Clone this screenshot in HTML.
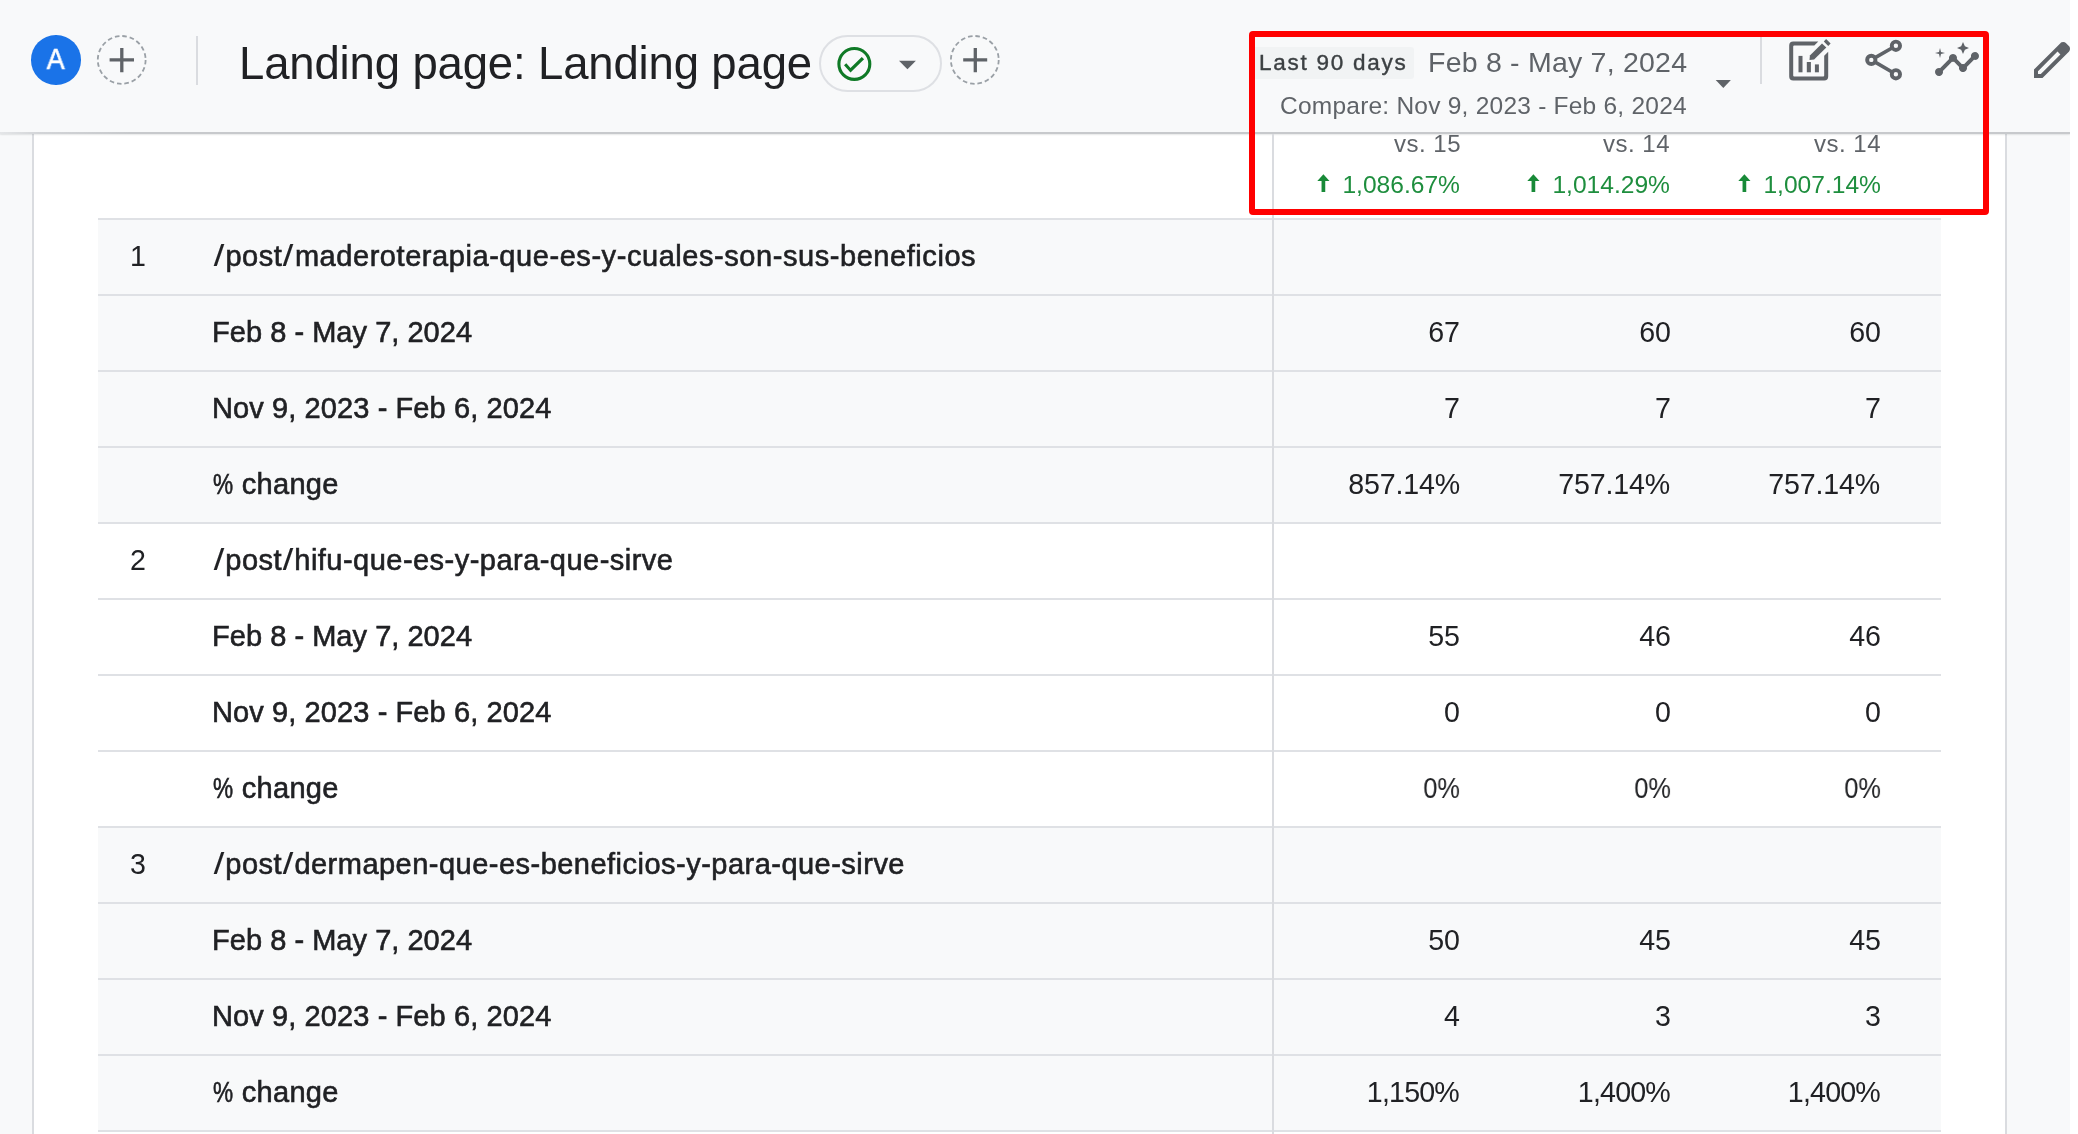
<!DOCTYPE html>
<html lang="en">
<head>
<meta charset="utf-8">
<title>Landing page: Landing page</title>
<style>
html,body{margin:0;padding:0;}
body{width:2078px;height:1134px;overflow:hidden;background:#f8f9fa;position:relative;font-family:"Liberation Sans",sans-serif;color:#202124;}
.abs{position:absolute;}
.t{position:absolute;white-space:nowrap;line-height:1;will-change:transform;}
#strip{left:2070px;top:0;width:8px;height:1134px;background:#fff;}
#card{left:32px;top:134px;width:1971px;height:1010px;background:#fff;border-left:2px solid #dadce0;border-right:2px solid #dadce0;}
#hline{left:0;top:132px;width:2070px;height:2px;background:linear-gradient(90deg,#e4e6e8 0,#d2d4d7 40px,#c7c9cc 130px);box-shadow:0 1px 1.5px rgba(60,64,67,.12);}
.grp{left:98px;width:1843px;height:304px;background:#f8f9fa;}
.rl{left:98px;width:1843px;height:2px;background:#dfe1e5;}
#vline{left:1272px;top:134px;width:2px;height:1000px;background:#dadce0;}
.lbl{font-size:29px;font-weight:400;color:#202124;-webkit-text-stroke:0.6px #202124;}
.idx{font-size:28.6px;color:#202124;}
.num{font-size:28.6px;color:#202124;text-align:right;width:300px;}
.c1{left:1160px;}.c2{left:1370px;}.c3{left:1580px;}
.vs{font-size:24px;color:#5f6368;text-align:right;width:300px;}
.pc{font-size:24.6px;color:#1e8e3e;letter-spacing:0;text-align:right;width:300px;}
</style>
</head>
<body>
<div class="abs" id="card"></div>
<div class="abs" id="hline"></div>
<div class="abs" id="strip"></div>
<!--TABLE-->
<div class="abs grp" style="top:218px"></div>
<div class="abs rl" style="top:218px"></div>
<div class="t idx" style="left:130px;top:241.8px">1</div>
<div class="t lbl" style="left:212.6px;top:242.3px;letter-spacing:0.56px"><span style="display:inline-block;transform:scaleX(1.3);-webkit-text-stroke:0.1px #202124;margin:0 1.900px">/</span>post<span style="display:inline-block;transform:scaleX(1.3);-webkit-text-stroke:0.1px #202124;margin:0 1.900px">/</span>maderoterapia-que-es-y-cuales-son-sus-beneficios</div>
<div class="abs rl" style="top:294px"></div>
<div class="t lbl" style="left:211.9px;top:318.3px;letter-spacing:0.03px">Feb 8 - May 7, 2024</div>
<div class="t num" style="left:1160.00px;top:317.8px;">67</div>
<div class="t num" style="left:1370.50px;top:317.8px;">60</div>
<div class="t num" style="left:1580.50px;top:317.8px;">60</div>
<div class="abs rl" style="top:370px"></div>
<div class="t lbl" style="left:211.6px;top:394.3px;letter-spacing:0.1px">Nov 9, 2023 - Feb 6, 2024</div>
<div class="t num" style="left:1160.00px;top:393.8px;">7</div>
<div class="t num" style="left:1370.50px;top:393.8px;">7</div>
<div class="t num" style="left:1580.50px;top:393.8px;">7</div>
<div class="abs rl" style="top:446px"></div>
<div class="t lbl" style="left:213px;top:470.3px;letter-spacing:0.3px"><span style="display:inline-block;transform:scaleX(.78);transform-origin:left center;margin-right:-5.700px">%</span> change</div>
<div class="t num" style="left:1159.83px;top:469.8px;letter-spacing:-0.17px;">857.14%</div>
<div class="t num" style="left:1370.33px;top:469.8px;letter-spacing:-0.17px;">757.14%</div>
<div class="t num" style="left:1580.33px;top:469.8px;letter-spacing:-0.17px;">757.14%</div>
<div class="abs rl" style="top:522px"></div>
<div class="t idx" style="left:130px;top:545.8px">2</div>
<div class="t lbl" style="left:212.6px;top:546.3px;letter-spacing:0.47px"><span style="display:inline-block;transform:scaleX(1.3);-webkit-text-stroke:0.1px #202124;margin:0 1.900px">/</span>post<span style="display:inline-block;transform:scaleX(1.3);-webkit-text-stroke:0.1px #202124;margin:0 1.900px">/</span>hifu-que-es-y-para-que-sirve</div>
<div class="abs rl" style="top:598px"></div>
<div class="t lbl" style="left:211.9px;top:622.3px;letter-spacing:0.03px">Feb 8 - May 7, 2024</div>
<div class="t num" style="left:1160.00px;top:621.8px;">55</div>
<div class="t num" style="left:1370.50px;top:621.8px;">46</div>
<div class="t num" style="left:1580.50px;top:621.8px;">46</div>
<div class="abs rl" style="top:674px"></div>
<div class="t lbl" style="left:211.6px;top:698.3px;letter-spacing:0.1px">Nov 9, 2023 - Feb 6, 2024</div>
<div class="t num" style="left:1160.00px;top:697.8px;">0</div>
<div class="t num" style="left:1370.50px;top:697.8px;">0</div>
<div class="t num" style="left:1580.50px;top:697.8px;">0</div>
<div class="abs rl" style="top:750px"></div>
<div class="t lbl" style="left:213px;top:774.3px;letter-spacing:0.3px"><span style="display:inline-block;transform:scaleX(.78);transform-origin:left center;margin-right:-5.700px">%</span> change</div>
<div class="t num" style="left:1160.00px;top:773.8px;transform:scaleX(.89);transform-origin:right center;">0%</div>
<div class="t num" style="left:1370.50px;top:773.8px;transform:scaleX(.89);transform-origin:right center;">0%</div>
<div class="t num" style="left:1580.50px;top:773.8px;transform:scaleX(.89);transform-origin:right center;">0%</div>
<div class="abs grp" style="top:826px"></div>
<div class="abs rl" style="top:826px"></div>
<div class="t idx" style="left:130px;top:849.8px">3</div>
<div class="t lbl" style="left:212.6px;top:850.3px;letter-spacing:0.48px"><span style="display:inline-block;transform:scaleX(1.3);-webkit-text-stroke:0.1px #202124;margin:0 1.900px">/</span>post<span style="display:inline-block;transform:scaleX(1.3);-webkit-text-stroke:0.1px #202124;margin:0 1.900px">/</span>dermapen-que-es-beneficios-y-para-que-sirve</div>
<div class="abs rl" style="top:902px"></div>
<div class="t lbl" style="left:211.9px;top:926.3px;letter-spacing:0.03px">Feb 8 - May 7, 2024</div>
<div class="t num" style="left:1160.00px;top:925.8px;">50</div>
<div class="t num" style="left:1370.50px;top:925.8px;">45</div>
<div class="t num" style="left:1580.50px;top:925.8px;">45</div>
<div class="abs rl" style="top:978px"></div>
<div class="t lbl" style="left:211.6px;top:1002.3px;letter-spacing:0.1px">Nov 9, 2023 - Feb 6, 2024</div>
<div class="t num" style="left:1160.00px;top:1001.8px;">4</div>
<div class="t num" style="left:1370.50px;top:1001.8px;">3</div>
<div class="t num" style="left:1580.50px;top:1001.8px;">3</div>
<div class="abs rl" style="top:1054px"></div>
<div class="t lbl" style="left:213px;top:1078.3px;letter-spacing:0.3px"><span style="display:inline-block;transform:scaleX(.78);transform-origin:left center;margin-right:-5.700px">%</span> change</div>
<div class="t num" style="left:1159.20px;top:1077.8px;letter-spacing:-0.8px;">1,150%</div>
<div class="t num" style="left:1369.70px;top:1077.8px;letter-spacing:-0.8px;">1,400%</div>
<div class="t num" style="left:1579.70px;top:1077.8px;letter-spacing:-0.8px;">1,400%</div>
<div class="abs rl" style="top:1130px"></div>
<div class="abs" id="vline"></div>
<!--/TABLE-->
<!--HEADER-->
<div class="abs" id="avatar" style="left:31.3px;top:35.2px;width:49.5px;height:49.4px;border-radius:50%;background:#1a73e8;"></div>
<div class="t" id="avA" style="left:31.2px;top:45.3px;width:49.2px;text-align:center;font-size:29px;color:#fff;-webkit-text-stroke:0.6px #fff;transform:scaleX(.93);">A</div>
<svg class="abs" style="left:96px;top:34px;" width="52" height="52" viewBox="0 0 52 52"><circle cx="25.7" cy="25.9" r="23.9" fill="none" stroke="#9aa0a6" stroke-width="1.8" stroke-dasharray="4.6 2.9"/><path d="M13.6 25.9h24.4M25.8 14v24.2" stroke="#5f6368" stroke-width="3.3" fill="none"/></svg>
<div class="abs" style="left:196px;top:35.5px;width:2px;height:49px;background:#dadce0;"></div>
<div class="t" id="title" style="left:239.3px;top:40.8px;font-size:45.5px;color:#202124;letter-spacing:-0.15px;">Landing page: Landing page</div>
<div class="abs" id="pill" style="left:819.4px;top:35.2px;width:118.2px;height:52.8px;border:2px solid #dee0e4;border-radius:30px;"></div>
<svg class="abs" style="left:834px;top:44px;" width="42" height="42" viewBox="0 0 42 42"><circle cx="20.35" cy="19.9" r="15.45" fill="none" stroke="#0f7a26" stroke-width="3.1"/><path d="M10 21.2l2.300-2 4.200 4.700 11.250-11 2.350 2.400-13.600 13.300z" fill="#0f7a26"/></svg>
<svg class="abs" style="left:898px;top:59px;" width="20" height="12" viewBox="0 0 20 12"><path d="M1 1.8h16.9L9.45 10.3z" fill="#5f6368"/></svg>
<svg class="abs" style="left:949px;top:34px;" width="52" height="52" viewBox="0 0 52 52"><circle cx="25.8" cy="25.9" r="23.9" fill="none" stroke="#9aa0a6" stroke-width="1.8" stroke-dasharray="4.6 2.9"/><path d="M14.2 25.8h24M26.3 14v24.2" stroke="#5f6368" stroke-width="3.3" fill="none"/></svg>

<div class="abs" id="chip" style="left:1251px;top:47px;width:163.4px;height:32.3px;background:#f1f3f4;border-radius:3px;"></div>
<div class="t" id="last90" style="left:1258.8px;top:51.9px;font-size:22.5px;color:#3c4043;letter-spacing:1.75px;-webkit-text-stroke:0.4px #3c4043;">Last 90 days</div>
<div class="t" id="drange" style="left:1427.5px;top:47.6px;font-size:28.5px;color:#5f6368;letter-spacing:0.22px;">Feb 8 - May 7, 2024</div>
<div class="t" id="cmp" style="left:1280.3px;top:93.5px;font-size:24.5px;color:#5f6368;letter-spacing:0.23px;">Compare: Nov 9, 2023 - Feb 6, 2024</div>
<svg class="abs" style="left:1714px;top:78px;" width="20" height="12" viewBox="0 0 20 12"><path d="M1.7 2h15.2L9.3 10z" fill="#5f6368"/></svg>
<div class="abs" style="left:1760px;top:37px;width:2px;height:47px;background:#dadce0;"></div>

<svg class="abs" id="ic1" style="left:1783px;top:36px;" width="52" height="48" viewBox="0 0 52 48" fill="#5f6368">
<path d="M35.3 5.400H10.200a4 4 0 0 0-4 4V40.500a4 4 0 0 0 4 4H41.200a4 4 0 0 0 4-4V15.700l-4 4V39.500a1 1 0 0 1-1 1H11.200a1 1 0 0 1-1-1V10.400a1 1 0 0 1 1-1H31.300z"/>
<rect x="15.500" y="19.900" width="4" height="16.400"/><rect x="23.800" y="26" width="4.100" height="10.300"/><rect x="31.900" y="28.400" width="4" height="7.900"/>
<path d="M26.500 24l.4-4.600L39 7.500l4.300 4-12.200 12.100z"/><path d="M40.800 5.440l2.340-2.340 4.460 4.460-2.340 2.340z"/>
</svg>
<svg class="abs" id="ic2" style="left:1858px;top:34px;" width="52" height="52" viewBox="0 0 52 52" fill="none" stroke="#5f6368"><path d="M13.300 25.900L37.900 11.800M13.300 25.900L37.900 40.300" stroke-width="3.600"/><g fill="#f8f9fa" stroke-width="3.900"><circle cx="37.900" cy="11.800" r="4.150"/><circle cx="13.300" cy="25.900" r="4.150"/><circle cx="37.900" cy="40.300" r="4.150"/></g></svg>
<svg class="abs" id="ic3" style="left:1933px;top:35.8px;" width="48" height="48" viewBox="0 0 24 24" fill="#5f6368"><path d="M21 8c-1.450 0-2.260 1.440-1.930 2.510l-3.550 3.560c-.3-.09-.74-.09-1.040 0l-2.550-2.550C12.270 10.450 11.460 9 10 9c-1.450 0-2.270 1.440-1.930 2.520l-4.560 4.550C2.440 15.740 1 16.550 1 18c0 1.100.9 2 2 2 1.450 0 2.260-1.440 1.930-2.510l4.550-4.560c.3.09.74.09 1.040 0l2.550 2.550C12.730 16.550 13.540 18 15 18c1.450 0 2.270-1.440 1.930-2.520l3.560-3.550c1.070.33 2.510-.48 2.510-1.930 0-1.100-.9-2-2-2z"/><path d="M15 9l.94-2.070L18 6l-2.060-.93L15 3l-.92 2.070L12 6l2.080.93z"/><path d="M3.500 11L4 9l2-.5L4 8l-.5-2L3 8l-2 .5L3 9z"/></svg>
<svg class="abs" id="ic4" style="left:2027.8px;top:35.9px;" width="48" height="48" viewBox="0 -960 960 960" fill="#5f6368"><path d="M200-200h57l391-391-57-57-391 391v57Zm-80 80v-170l528-527q12-11 26.500-17t30.500-6q16 0 31 6t26 18l55 56q12 11 17.500 26t5.500 30q0 16-5.500 30.500T817-647L290-120H120Zm640-584-56-56 56 56Zm-141 85-28-29 57 57-29-28Z"/></svg>

<div class="t vs" style="left:1160.5px;top:131.500px;letter-spacing:0.5px;">vs. 15</div>
<div class="t vs" style="left:1370px;top:131.500px;letter-spacing:0.5px;">vs. 14</div>
<div class="t vs" style="left:1581px;top:131.500px;letter-spacing:0.5px;">vs. 14</div>
<div class="t pc" style="left:1160px;top:172.500px;">1,086.67%</div>
<div class="t pc" style="left:1370px;top:172.500px;">1,014.29%</div>
<div class="t pc" style="left:1581px;top:172.500px;">1,007.14%</div>
<svg class="abs ar" style="left:1314.0px;top:172px;" width="20" height="22" viewBox="0 0 20 22"><path d="M9.400 2.200l6.100 6.700h-4.250V20h-3.700V8.900H3.300z" fill="#188a38"/></svg>
<svg class="abs ar" style="left:1524.3px;top:172px;" width="20" height="22" viewBox="0 0 20 22"><path d="M9.400 2.200l6.100 6.700h-4.250V20h-3.700V8.900H3.300z" fill="#188a38"/></svg>
<svg class="abs ar" style="left:1734.5px;top:172px;" width="20" height="22" viewBox="0 0 20 22"><path d="M9.400 2.200l6.100 6.700h-4.250V20h-3.700V8.900H3.300z" fill="#188a38"/></svg>
<!--/HEADER-->
<!--REDBOX-->
<div class="abs" id="redbox" style="left:1249px;top:31px;width:728px;height:172px;border:6px solid #ff0000;border-radius:4px;"></div>
<!--/REDBOX-->
</body>
</html>
